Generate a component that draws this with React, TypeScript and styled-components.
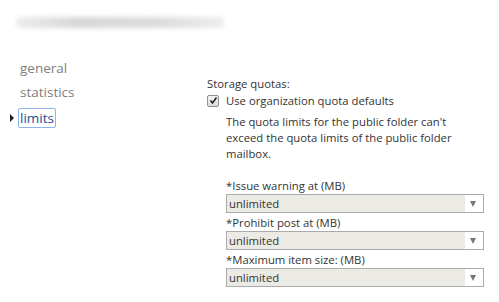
import React from "react";
import styled, { createGlobalStyle } from "styled-components";

const Global = createGlobalStyle`
  html, body { margin: 0; padding: 0; background: #fff; }
  body { font-family: "Open Sans", "Noto Sans", sans-serif; color: #333; }
`;

const Page = styled.div`
  width: 499px;
  height: 302px;
  overflow: hidden;
  position: relative;
`;

const Header = styled.div`
  height: 52px;
  padding: 17px 0 0 16px;
  box-sizing: border-box;
`;

const BlurTitle = styled.div`
  width: 208px;
  height: 11px;
  background: linear-gradient(90deg, #ececec 0%, #d6d6d6 30%, #dcdcdc 70%, #ededed 100%);
  filter: blur(2.5px);
  border-radius: 4px;
`;

const Body = styled.div`
  display: flex;
`;

const Nav = styled.ul`
  list-style: none;
  margin: 0;
  padding: 6px 0 0 20px;
  width: 207px;
  box-sizing: border-box;
  display: flex;
  flex-direction: column;
  gap: 4px;
`;

const NavItem = styled.li<{ $active?: boolean }>`
  position: relative;
  font-family: "Open Sans", sans-serif;
  font-size: 13.5px;
  color: ${(p) => (p.$active ? "#1d4f91" : "#808080")};
  align-self: flex-start;
  padding: 0 1px;
  margin-left: -2px;
  margin-top: ${(p) => (p.$active ? "2px" : "0")};
  border: 1px solid ${(p) => (p.$active ? "#8fb3ea" : "transparent")};
  border-radius: 2px;
  height: 20px;
  box-sizing: border-box;
  display: flex;
  align-items: center;
`;

const Arrow = styled.span`
  position: absolute;
  left: -9px;
  top: 5px;
  width: 0;
  height: 0;
  border-top: 4px solid transparent;
  border-bottom: 4px solid transparent;
  border-left: 4px solid #222;
`;

const Content = styled.div`
  padding-top: 24px;
  font-size: 11.3px;
  line-height: 16px;
  color: #333;
`;

const SectionLabel = styled.div``;

const CheckRow = styled.label`
  display: flex;
  align-items: center;
  gap: 7px;
  height: 17px;
`;

const Check = styled.span`
  width: 12px;
  height: 12px;
  border: 1px solid #8f8f8f;
  border-radius: 2px;
  background: linear-gradient(#f4f4f4, #dcdcdc);
  box-sizing: border-box;
  display: flex;
  align-items: center;
  justify-content: center;
`;

const Indented = styled.div`
  padding-left: 19px;
`;

const Note = styled.p`
  margin: 5px 0 0;
  width: 255px;
`;

const FieldGroup = styled.div`
  margin-top: 16px;
  display: flex;
  flex-direction: column;
`;

const FieldLabel = styled.div`
  line-height: 16px;
  height: 16px;
`;

const Select = styled.div`
  width: 258px;
  height: 19px;
  box-sizing: border-box;
  border: 1px solid #ababab;
  display: flex;
  background: #fff;
  margin-bottom: 2px;
`;

const SelectValue = styled.div`
  flex: 1;
  background: #ebeae4;
  padding-left: 2px;
  line-height: 17px;
  color: #333;
`;

const SelectArrow = styled.div`
  width: 16px;
  display: flex;
  align-items: center;
  justify-content: center;
  padding-right: 2px;
`;

const Tri = styled.span`
  width: 0;
  height: 0;
  border-left: 3.5px solid transparent;
  border-right: 3.5px solid transparent;
  border-top: 6px solid #777;
`;

const fields = [
  "*Issue warning at (MB)",
  "*Prohibit post at (MB)",
  "*Maximum item size: (MB)",
];

export default function App() {
  return (
    <Page>
      <Global />
      <Header>
        <BlurTitle />
      </Header>
      <Body>
        <Nav>
          <NavItem>general</NavItem>
          <NavItem>statistics</NavItem>
          <NavItem $active>
            <Arrow />
            limits
          </NavItem>
        </Nav>
        <Content>
          <SectionLabel>Storage quotas:</SectionLabel>
          <CheckRow>
            <Check>
              <svg width="9" height="9" viewBox="0 0 9 9">
                <path d="M1.5 4.5 L3.5 7 L7.5 1.5" stroke="#222" strokeWidth="1.6" fill="none" />
              </svg>
            </Check>
            Use organization quota defaults
          </CheckRow>
          <Indented>
            <Note>
              The quota limits for the public folder can't exceed the quota limits of the public folder mailbox.
            </Note>
            <FieldGroup>
              {fields.map((f) => (
                <React.Fragment key={f}>
                  <FieldLabel>{f}</FieldLabel>
                  <Select>
                    <SelectValue>unlimited</SelectValue>
                    <SelectArrow>
                      <Tri />
                    </SelectArrow>
                  </Select>
                </React.Fragment>
              ))}
            </FieldGroup>
          </Indented>
        </Content>
      </Body>
    </Page>
  );
}
